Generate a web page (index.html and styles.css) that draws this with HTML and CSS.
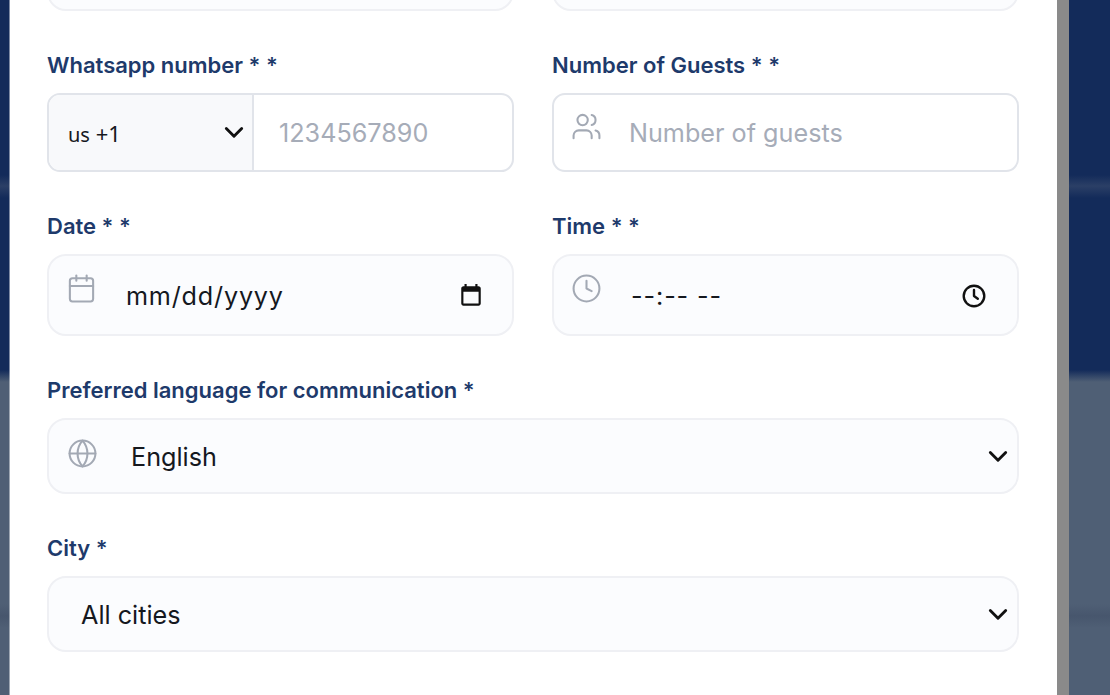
FILE: index.html
```html
<!DOCTYPE html>
<html lang="en">
<head>
  <meta charset="UTF-8">
  <meta name="viewport" content="width=device-width, initial-scale=1.0">
  <title>Booking form</title>
  <link rel="stylesheet" href="styles.css">
</head>
<body>
<div class="page">
  <div class="modal">
    <form class="form">
      <div class="field">
        <div class="box box-soft box-cut"></div>
      </div>
      <div class="field">
        <div class="box box-soft box-cut"></div>
      </div>

      <div class="field">
        <label class="label">Whatsapp number * *</label>
        <div class="box box-phone">
          <div class="phone-code">
            <span class="code-text"><span class="code-flag">us</span> +1</span>
            <svg class="chevron" viewBox="0 0 20 20" fill="none" stroke="currentColor" stroke-width="2.6" stroke-linecap="round" stroke-linejoin="round">
              <path d="M3 6l7 7 7-7"></path>
            </svg>
          </div>
          <span class="placeholder phone-number">1234567890</span>
        </div>
      </div>

      <div class="field">
        <label class="label">Number of Guests * *</label>
        <div class="box box-guests">
          <svg class="field-icon icon-guests" viewBox="0 0 24 24" fill="none" stroke="currentColor" stroke-width="1.6" stroke-linecap="round" stroke-linejoin="round">
            <path d="M16 21v-2a4 4 0 0 0-4-4H6a4 4 0 0 0-4 4v2"></path>
            <circle cx="9" cy="7" r="4"></circle>
            <path d="M22 21v-2a4 4 0 0 0-3-3.870"></path>
            <path d="M16 3.130a4 4 0 0 1 0 7.750"></path>
          </svg>
          <span class="placeholder">Number of guests</span>
        </div>
      </div>

      <div class="field">
        <label class="label">Date * *</label>
        <div class="box box-soft box-date">
          <svg class="field-icon icon-date" viewBox="0 0 24 24" fill="none" stroke="currentColor" stroke-width="1.6" stroke-linecap="round" stroke-linejoin="round">
            <rect x="3" y="4" width="18" height="18" rx="2"></rect>
            <path d="M16 2v4"></path>
            <path d="M8 2v4"></path>
            <path d="M3 10h18"></path>
          </svg>
          <span class="value date-value">mm/dd/yyyy</span>
          <svg class="picker-icon picker-date" viewBox="0 0 24 24" fill="currentColor">
            <path d="M19 3h-1V1h-2v2H8V1H6v2H5c-1.100 0-2 .9-2 2v14c0 1.100.9 2 2 2h14c1.100 0 2-.9 2-2V5c0-1.100-.9-2-2-2zm0 16H5V8h14v11z"></path>
          </svg>
        </div>
      </div>

      <div class="field">
        <label class="label">Time * *</label>
        <div class="box box-soft box-date">
          <svg class="field-icon icon-time" viewBox="0 0 24 24" fill="none" stroke="currentColor" stroke-width="1.6" stroke-linecap="round" stroke-linejoin="round">
            <circle cx="12" cy="12" r="10"></circle>
            <path d="M12 6v6l4 2"></path>
          </svg>
          <span class="value time-value">--:-- --</span>
          <svg class="picker-icon picker-time" viewBox="0 0 24 24" fill="none" stroke="currentColor" stroke-width="2.2" stroke-linecap="round" stroke-linejoin="round">
            <circle cx="12" cy="12" r="9.500"></circle>
            <path d="M12 6.500V12l3.500 2.500"></path>
          </svg>
        </div>
      </div>

      <div class="field field-wide">
        <label class="label">Preferred language for communication *</label>
        <div class="box box-soft box-select">
          <svg class="field-icon icon-lang" viewBox="0 0 24 24" fill="none" stroke="currentColor" stroke-width="1.6" stroke-linecap="round" stroke-linejoin="round">
            <circle cx="12" cy="12" r="10"></circle>
            <path d="M2 12h20"></path>
            <path d="M12 2a15 15 0 0 1 0 20 15 15 0 0 1 0-20z"></path>
          </svg>
          <span class="value lang-value">English</span>
          <svg class="chevron" viewBox="0 0 20 20" fill="none" stroke="currentColor" stroke-width="2.6" stroke-linecap="round" stroke-linejoin="round">
            <path d="M3 6l7 7 7-7"></path>
          </svg>
        </div>
      </div>

      <div class="field field-wide">
        <label class="label">City *</label>
        <div class="box box-soft box-select">
          <span class="value city-value">All cities</span>
          <svg class="chevron" viewBox="0 0 20 20" fill="none" stroke="currentColor" stroke-width="2.6" stroke-linecap="round" stroke-linejoin="round">
            <path d="M3 6l7 7 7-7"></path>
          </svg>
        </div>
      </div>
    </form>
  </div>
  <div class="scrollbar"></div>
</div>
</body>
</html>
```

FILE: styles.css
```css
:root {
  --navy: #132b5a;
  --slate: #4f5f75;
  --label: #1e3a6b;
  --border: #e1e4ea;
  --border-soft: #eff0f4;
  --soft-bg: #fbfcfe;
  --muted: #a6acb8;
  --icon: #a3a9b4;
  --text: #15181e;
}

* {
  margin: 0;
  padding: 0;
  box-sizing: border-box;
}

html, body {
  height: 100%;
  overflow: hidden;
}

body {
  font-family: Inter, "Liberation Sans", sans-serif;
  color: var(--text);
  background: linear-gradient(to bottom, var(--navy) 0, var(--navy) 175px, #2b3f66 186px, var(--navy) 198px, var(--navy) 370px, var(--slate) 382px, var(--slate) 604px, #47566d 616px, var(--slate) 628px);
}

.page {
  display: flex;
  height: 695px;
  padding-left: 10px;
}

.modal {
  width: 1047px;
  height: 695px;
  overflow: hidden;
  background-color: #fff;
  box-shadow: -1px 0 0 rgba(255, 255, 255, 0.45);
}

.scrollbar {
  width: 12px;
  height: 695px;
  background-color: #8a8a8a;
}

.form {
  display: grid;
  grid-template-columns: 467px 467px;
  column-gap: 38px;
  row-gap: 41px;
  margin-top: -34px;
  padding: 0 37px;
}

.field-wide {
  grid-column: 1 / -1;
}

.label {
  display: block;
  margin-bottom: 15px;
  font-size: 22px;
  line-height: 26px;
  font-weight: 600;
  color: var(--label);
}

.box {
  display: flex;
  align-items: center;
  position: relative;
  border: 2px solid var(--border);
  border-radius: 13px;
  background-color: #fff;
}

.box-soft {
  border-color: var(--border-soft);
  border-radius: 19px;
  background-color: var(--soft-bg);
}

.box-cut {
  height: 45px;
}

.box-phone,
.box-guests {
  height: 79px;
}

.box-date {
  height: 82px;
  padding-top: 2px;
}

.box-select {
  height: 76px;
  padding-top: 2px;
}

.box-phone {
  overflow: hidden;
}

.phone-code {
  display: flex;
  align-items: center;
  justify-content: space-between;
  width: 205px;
  height: 100%;
  padding: 0 7px 0 19px;
  border-right: 2px solid var(--border);
  background-color: #f8f9fb;
}

.code-text {
  font-family: "Noto Sans", sans-serif;
  font-size: 22px;
}

.code-flag {
  font-size: 20px;
}

.chevron {
  width: 22px;
  height: 22px;
  color: #111;
}

.box-select .chevron {
  margin-left: auto;
  margin-right: 8px;
}

.placeholder {
  font-size: 25.200px;
  color: var(--muted);
}

.phone-number {
  margin-left: 25px;
}

.value {
  font-size: 25.200px;
}

.field-icon {
  position: absolute;
  width: 31px;
  height: 31px;
  color: var(--icon);
}

.icon-guests {
  top: 16px;
  left: 17px;
}

.box-guests .placeholder {
  margin-left: 75px;
}

.icon-date {
  top: 17px;
  left: 17px;
}

.icon-time {
  top: 17px;
  left: 17px;
}

.icon-lang {
  top: 18px;
  left: 18px;
}

.date-value {
  margin-left: 77px;
  letter-spacing: 0.8px;
}

.time-value {
  margin-left: 77px;
  letter-spacing: 0.9px;
}

.lang-value {
  margin-left: 82px;
}

.city-value {
  margin-left: 32px;
}

.picker-icon {
  width: 26px;
  height: 26px;
  margin-left: auto;
  color: #111;
}

.picker-date {
  margin-right: 28px;
}

.picker-time {
  margin-right: 30px;
}
```
